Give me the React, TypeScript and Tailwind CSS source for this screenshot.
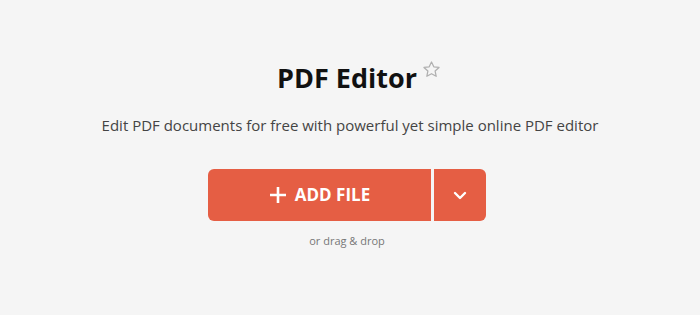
import React from "react";

export default function App() {
  return (
    <div className="w-[700px] h-[315px] bg-[#f5f5f5] flex flex-col items-center" style={{ fontFamily: '"Open Sans", sans-serif' }}>
      <div className="mt-[58px] flex items-start pl-[18px]">
        <h1 className="text-[27px] leading-[40px] font-bold text-[#111]">PDF Editor</h1>
        <svg className="ml-[5px] mt-[2px]" width="19" height="19" viewBox="0 0 24 24" fill="none" stroke="#b0b0b0" strokeWidth="1.6" strokeLinejoin="round">
          <path d="M12 2.5l2.9 6.1 6.6.8-4.9 4.6 1.3 6.6L12 17.3l-5.9 3.3 1.3-6.6-4.9-4.6 6.6-.8z" />
        </svg>
      </div>
      <p className="mt-[15px] text-[15px] leading-[24px] text-[#444]">
        Edit PDF documents for free with powerful yet simple online PDF editor
      </p>
      <div className="mt-[32px] mr-[6px] flex gap-[3px]">
        <button className="w-[223px] h-[52px] bg-[#e55e44] rounded-l-[6px] flex items-center justify-center gap-[8px] text-white font-bold text-[17px]">
          <svg width="18" height="18" viewBox="0 0 18 18" stroke="white" strokeWidth="2.6" strokeLinecap="butt">
            <path d="M9 1v16M1 9h16" />
          </svg>
          <span>ADD FILE</span>
        </button>
        <button className="w-[52px] h-[52px] bg-[#e55e44] rounded-r-[6px] flex items-center justify-center">
          <svg width="14" height="9" viewBox="0 0 14 9" fill="none" stroke="white" strokeWidth="2.4" strokeLinecap="round" strokeLinejoin="round">
            <path d="M2 2l5 5 5-5" />
          </svg>
        </button>
      </div>
      <p className="mt-[12px] mr-[6px] text-[11px] leading-[16px] text-[#777]">or drag &amp; drop</p>
    </div>
  );
}
